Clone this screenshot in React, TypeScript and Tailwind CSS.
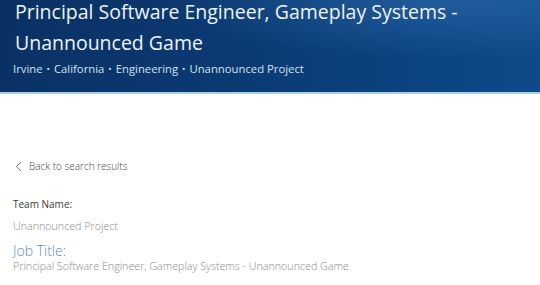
export default function App() {
  const tags = ["Irvine", "California", "Engineering", "Unannounced Project"];

  return (
    <div className="w-[540px] h-[285px] overflow-hidden bg-white font-['Open_Sans',sans-serif]">
      <header className="relative flex flex-col h-[94px] bg-[linear-gradient(100deg,#0a3164_0%,#0b3a73_45%,#0c4280_75%,#0f4a88_100%)] border-b-2 border-[#a9cde4]">
        <div className="absolute inset-0 bg-[radial-gradient(ellipse_at_82%_0%,rgba(70,140,210,0.35),transparent_45%)]" />
        <div className="relative px-[15px] -mt-[4px]">
          <h1 className="text-[19.5px] leading-[31px] text-[#eef3f8] font-normal">
            Principal Software Engineer, Gameplay Systems -<br />
            Unannounced Game
          </h1>
          <p className="mt-[3px] flex items-center text-[11.3px] leading-[16px] text-[#d6e2ee] -ml-[2px]">
            {tags.map((t, i) => (
              <span key={t} className="flex items-center">
                {i > 0 && <span className="mx-[4px] text-[9px]">•</span>}
                {t}
              </span>
            ))}
          </p>
        </div>
      </header>

      <main className="px-[13px] pt-[65px]">
        <a className="flex items-center gap-[6px] text-[10px] leading-[14px] text-[#444] font-light">
          <svg width="8" height="11" viewBox="0 0 8 11" className="ml-[2px]">
            <path d="M6 1 L1.5 5.5 L6 10" fill="none" stroke="#777" strokeWidth="1" />
          </svg>
          Back to search results
        </a>

        <div className="mt-[24px] text-[10px] leading-[14px] text-[#3a3a3a]">Team Name:</div>
        <div className="mt-[8px] text-[10.7px] leading-[14px] text-[#8a8a8a] font-light">
          Unannounced Project
        </div>
        <div className="mt-[9px] text-[14px] leading-[18px] text-[#5a8cc2] font-light">Job Title:</div>
        <div className="-mt-[1px] text-[10.7px] leading-[14px] text-[#8a8a8a] font-light">
          Principal Software Engineer, Gameplay Systems - Unannounced Game
        </div>
      </main>
    </div>
  );
}
